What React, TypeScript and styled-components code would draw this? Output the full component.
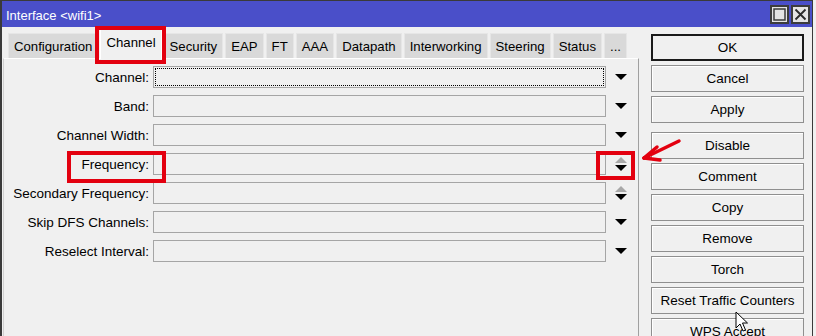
import React from 'react';
import styled, { createGlobalStyle } from 'styled-components';

const GlobalStyle = createGlobalStyle`
  html, body {
    margin: 0;
    padding: 0;
    background: #f0f0f0;
    overflow: hidden;
  }
  body {
    font-family: "Liberation Sans", Arial, sans-serif;
    font-size: 13.5px;
    color: #000;
  }
`;

const Window = styled.div`
  position: relative;
  width: 813px;
  height: 360px;
  box-sizing: border-box;
  border: 1px solid #3a3a3a;
  border-left-width: 2px;
  background: #f0f0f0;
  overflow: hidden;
`;

const TitleBar = styled.div`
  height: 26px;
  background: #4a4fc9;
  display: flex;
  align-items: center;
  padding-left: 4px;
  padding-right: 2px;
  color: #fff;
  font-size: 13px;
`;

const TitleText = styled.div`
  flex: 1;
  margin-top: 3px;
`;

const TitleButton = styled.div`
  width: 15px;
  height: 15px;
  border: 2px solid #3c3c3c;
  background: #e4e4e4;
  display: flex;
  align-items: center;
  justify-content: center;
  margin-left: 2px;
`;

const Body = styled.div`
  display: flex;
  padding-left: 1px;
`;

const LeftPane = styled.div`
  width: 636px;
  display: flex;
  flex-direction: column;
`;

const TabStrip = styled.div`
  height: 31px;
  display: flex;
  align-items: flex-end;
  gap: 2px;
  padding-left: 5px;
  position: relative;
  z-index: 1;
  font-size: 13.2px;
`;

const Tab = styled.div<{ $active?: boolean }>`
  height: ${({ $active }) => ($active ? '31px' : '25px')};
  margin-bottom: ${({ $active }) => ($active ? '-1px' : '0')};
  box-sizing: border-box;
  padding: ${({ $active }) => ($active ? '6px 5px 0' : '0 5px')};
  display: flex;
  align-items: ${({ $active }) => ($active ? 'flex-start' : 'center')};
  background: ${({ $active }) => ($active ? '#f0f0f0' : '#d9d9d9')};
  border: 1px solid ${({ $active }) => ($active ? '#ffffff' : '#e6e6e6')};
  border-bottom: none;
  white-space: nowrap;
`;

const Panel = styled.div`
  border: 1px solid #c8c8c8;
  border-top-color: #ffffff;
  border-left-color: #d0d0d0;
  border-right-color: #a0a0a0;
  padding-top: 7px;
  height: 300px;
  display: flex;
  flex-direction: column;
  gap: 7px;
`;

const Row = styled.div`
  display: flex;
  align-items: center;
  height: 22px;
`;

const Label = styled.div`
  width: 145px;
  text-align: right;
  white-space: nowrap;
  margin-right: 4px;
`;

const Field = styled.div<{ $focused?: boolean }>`
  width: 453px;
  height: 22px;
  box-sizing: border-box;
  border: 1px solid #a5a5a5;
  background: #f0f0f0;
  position: relative;

  &::after {
    content: '';
    display: ${({ $focused }) => ($focused ? 'block' : 'none')};
    position: absolute;
    inset: 1px;
    border: 1px dotted #000;
  }
`;

const Arrows = styled.div`
  width: 12px;
  margin-left: 9px;
  display: flex;
  flex-direction: column;
  gap: 2px;
`;

const Triangle = styled.div<{ $up?: boolean; $grey?: boolean }>`
  width: 0;
  height: 0;
  border-left: 6px solid transparent;
  border-right: 6px solid transparent;
  ${({ $up, $grey }) =>
    $up
      ? `border-bottom: 6px solid ${$grey ? '#a8a8a8' : '#000'};`
      : `border-top: 6px solid ${$grey ? '#a8a8a8' : '#000'};`}
`;

const RightPane = styled.div`
  width: 153px;
  margin-left: 12px;
  padding-top: 7px;
  display: flex;
  flex-direction: column;
  gap: 4px;
`;

const Button = styled.div<{ $default?: boolean; $spaced?: boolean }>`
  height: 27px;
  box-sizing: border-box;
  border: ${({ $default }) => ($default ? '2px solid #1a1a1a' : '1px solid #8f8f8f')};
  background: #f0f0f0;
  display: flex;
  align-items: center;
  justify-content: center;
  margin-top: ${({ $spaced }) => ($spaced ? '5px' : '0')};
  white-space: nowrap;
  box-shadow: ${({ $default }) => ($default ? 'none' : 'inset 1px 1px 0 #fff')};
`;

const Highlight = styled.div<{ $x: number; $y: number; $w: number; $h: number }>`
  position: absolute;
  left: ${({ $x }) => $x}px;
  top: ${({ $y }) => $y}px;
  width: ${({ $w }) => $w}px;
  height: ${({ $h }) => $h}px;
  box-sizing: border-box;
  border: 4px solid #e3000f;
  pointer-events: none;
  z-index: 5;
`;

const Overlay = styled.svg`
  position: absolute;
  left: 0;
  top: 0;
  width: 813px;
  height: 336px;
  pointer-events: none;
  z-index: 6;
`;

const tabs = ['Configuration', 'Channel', 'Security', 'EAP', 'FT', 'AAA', 'Datapath', 'Interworking', 'Steering', 'Status', '...'];

const fields: { label: string; spinner?: boolean }[] = [
  { label: 'Channel:' },
  { label: 'Band:' },
  { label: 'Channel Width:' },
  { label: 'Frequency:', spinner: true },
  { label: 'Secondary Frequency:', spinner: true },
  { label: 'Skip DFS Channels:' },
  { label: 'Reselect Interval:' },
];

const buttons: { label: string; def?: boolean; spaced?: boolean }[] = [
  { label: 'OK', def: true },
  { label: 'Cancel' },
  { label: 'Apply' },
  { label: 'Disable', spaced: true },
  { label: 'Comment' },
  { label: 'Copy' },
  { label: 'Remove' },
  { label: 'Torch' },
  { label: 'Reset Traffic Counters' },
  { label: 'WPS Accept' },
];

const App: React.FC = () => {
  return (
    <>
      <GlobalStyle />
      <Window>
        <TitleBar>
          <TitleText>Interface &lt;wifi1&gt;</TitleText>
          <TitleButton>
            <svg width="13" height="13" viewBox="0 0 13 13">
              <rect x="1" y="1" width="11" height="11" fill="none" stroke="#3c3c3c" strokeWidth="1.5" />
            </svg>
          </TitleButton>
          <TitleButton>
            <svg width="13" height="13" viewBox="0 0 13 13">
              <path d="M1.5 1.5 L11.5 11.5 M11.5 1.5 L1.5 11.5" stroke="#2a2a2a" strokeWidth="1.8" />
            </svg>
          </TitleButton>
        </TitleBar>
        <Body>
          <LeftPane>
            <TabStrip>
              {tabs.map((t) => (
                <Tab key={t} $active={t === 'Channel'}>
                  {t}
                </Tab>
              ))}
            </TabStrip>
            <Panel>
              {fields.map((f, i) => (
                <Row key={f.label}>
                  <Label>{f.label}</Label>
                  <Field $focused={i === 0} />
                  <Arrows>
                    {f.spinner && <Triangle $up $grey />}
                    <Triangle />
                  </Arrows>
                </Row>
              ))}
            </Panel>
          </LeftPane>
          <RightPane>
            {buttons.map((b) => (
              <Button key={b.label} $default={b.def} $spaced={b.spaced}>
                {b.label}
              </Button>
            ))}
          </RightPane>
        </Body>

        <Highlight $x={93} $y={25} $w={71} $h={38} />
        <Highlight $x={65} $y={150} $w={99} $h={32} />
        <Highlight $x={594} $y={150} $w={39} $h={29} />

        <Overlay viewBox="0 0 813 336">
          <g stroke="#e3000f" strokeWidth="3.5" strokeLinecap="round" fill="none">
            <path d="M677 140 L642 157" />
            <path d="M642 157 L655 146" />
            <path d="M642 157 L658 159" />
          </g>
          <path
            d="M734 311 L734 327 L738 323 L741 330 L743.5 329 L740.5 322 L745.5 322 Z"
            fill="#fff"
            stroke="#000"
            strokeWidth="1"
            strokeLinejoin="round"
          />
        </Overlay>
      </Window>
    </>
  );
};

export default App;
